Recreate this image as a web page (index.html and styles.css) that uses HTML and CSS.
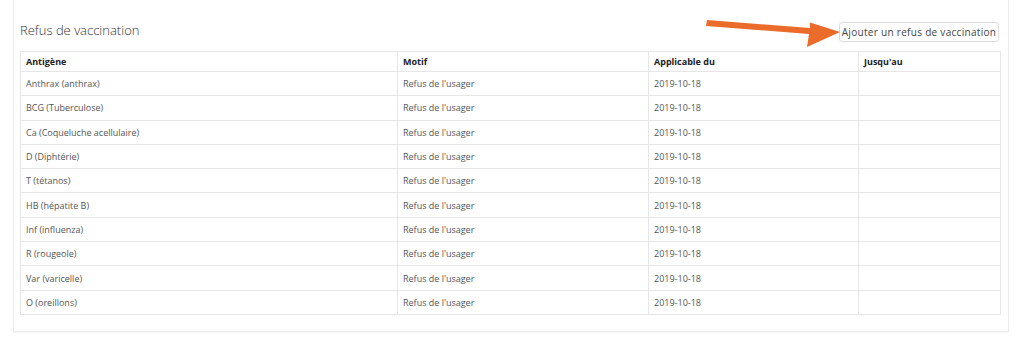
FILE: index.html
```html
<!DOCTYPE html>
<html lang="fr">
<head>
<meta charset="utf-8">
<title>Refus de vaccination</title>
<link rel="stylesheet" href="styles.css">
</head>
<body>
<div class="panel">
  <div class="panel-head">
    <h2 class="title">Refus de vaccination</h2>
    <button class="btn">Ajouter un refus de vaccination</button>
  </div>
  <table class="grid">
    <colgroup><col class="c1"><col class="c2"><col class="c3"><col class="c4"></colgroup>
    <thead>
      <tr><th>Antigène</th><th>Motif</th><th>Applicable du</th><th>Jusqu'au</th></tr>
    </thead>
    <tbody>
      <tr><td>Anthrax (anthrax)</td><td>Refus de l'usager</td><td>2019-10-18</td><td></td></tr>
      <tr><td>BCG (Tuberculose)</td><td>Refus de l'usager</td><td>2019-10-18</td><td></td></tr>
      <tr><td>Ca (Coqueluche acellulaire)</td><td>Refus de l'usager</td><td>2019-10-18</td><td></td></tr>
      <tr><td>D (Diphtérie)</td><td>Refus de l'usager</td><td>2019-10-18</td><td></td></tr>
      <tr><td>T (tétanos)</td><td>Refus de l'usager</td><td>2019-10-18</td><td></td></tr>
      <tr><td>HB (hépatite B)</td><td>Refus de l'usager</td><td>2019-10-18</td><td></td></tr>
      <tr><td>Inf (influenza)</td><td>Refus de l'usager</td><td>2019-10-18</td><td></td></tr>
      <tr><td>R (rougeole)</td><td>Refus de l'usager</td><td>2019-10-18</td><td></td></tr>
      <tr><td>Var (varicelle)</td><td>Refus de l'usager</td><td>2019-10-18</td><td></td></tr>
      <tr><td>O (oreillons)</td><td>Refus de l'usager</td><td>2019-10-18</td><td></td></tr>
    </tbody>
  </table>
</div>
<svg class="arrow" width="150" height="50" viewBox="0 0 150 50" aria-hidden="true">
  <polygon fill="#ea6b2a" points="7,15 110,23 110,17.5 140,27 107,42 109,29 6,21"/>
</svg>
</body>
</html>
```
FILE: styles.css
```css
html, body {
  margin: 0;
  padding: 0;
  background: #ffffff;
}
body {
  font-family: "Open Sans", "Liberation Sans", sans-serif;
  color: #555;
  position: relative;
  height: 345px;
  overflow: hidden;
}
.panel {
  margin: -10px 15px 0 13px;
  padding: 28px 9px 16px 6px;
  border: 1px solid #ececec;
  background: #fff;
  box-shadow: 0 1px 2px rgba(0,0,0,0.04);
}
.panel-head {
  display: flex;
  justify-content: space-between;
  align-items: flex-start;
  height: 32px;
}
.title {
  margin: 0;
  font-weight: 300;
  font-size: 13px;
  line-height: 20px;
  color: #333;
  padding-top: 1px;
}
.btn {
  margin-top: 3px;
  height: 20px;
  width: 160px;
  padding: 0;
  border: 1px solid #dcdcdc;
  border-radius: 3px;
  background: #fff;
  font-family: "Open Sans", "Liberation Sans", sans-serif;
  font-size: 10px;
  letter-spacing: 0.3px;
  white-space: nowrap;
  color: #444;
  text-align: center;
}
.grid {
  width: 980px;
  border-collapse: collapse;
  table-layout: fixed;
  font-size: 9px;
}
.c1 { width: 377px; }
.c2 { width: 251px; }
.c3 { width: 210px; }
.c4 { width: 142px; }
.grid th, .grid td {
  border: 1px solid #e6e6e6;
  text-align: left;
  padding: 0 5px;
  white-space: nowrap;
}
.grid th {
  height: 19px;
  font-weight: 700;
  color: #222;
}
.grid td {
  height: 23.3px;
  color: #555;
}
.arrow {
  position: absolute;
  left: 700px;
  top: 5px;
}
```
